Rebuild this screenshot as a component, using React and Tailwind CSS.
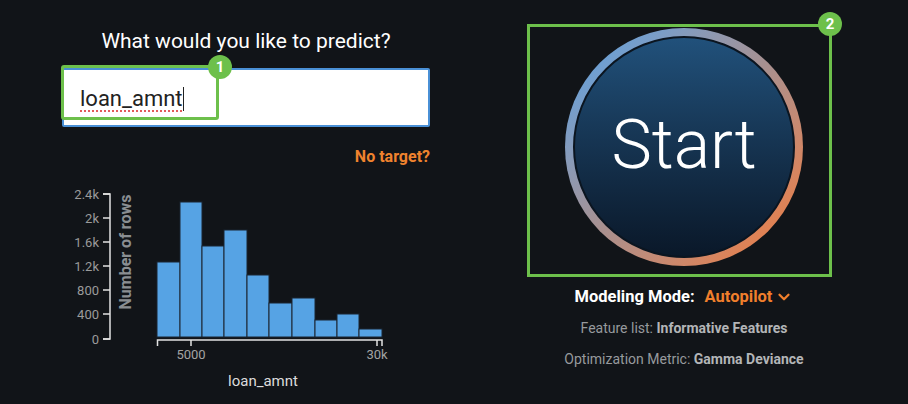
import { ChevronDown } from "lucide-react";

const bars = [
  { x: 157, h: 75 },
  { x: 180, h: 135 },
  { x: 202, h: 91 },
  { x: 224, h: 107 },
  { x: 247, h: 62 },
  { x: 269, h: 34 },
  { x: 292, h: 39 },
  { x: 315, h: 17 },
  { x: 337, h: 23 },
  { x: 359, h: 8 },
];

const yTicks = [
  { y: 195, label: "2.4k" },
  { y: 219, label: "2k" },
  { y: 243, label: "1.6k" },
  { y: 267, label: "1.2k" },
  { y: 291, label: "800" },
  { y: 315, label: "400" },
  { y: 340, label: "0" },
];

function Badge({ n, className }) {
  return (
    <span
      className={`absolute w-[24px] h-[24px] rounded-full bg-[#6dc04b] text-white text-[15px] font-bold flex items-center justify-center ${className}`}
    >
      {n}
    </span>
  );
}

function Histogram() {
  return (
    <svg width="368" height="219" viewBox="62 185 368 219" className="block">
      {/* y axis */}
      <path d="M103,195 H110 V340 H103" fill="none" stroke="#e2e2e2" strokeWidth="1.5" />
      {yTicks.map((t) => (
        <g key={t.label}>
          <line x1="103" x2="110" y1={t.y} y2={t.y} stroke="#e2e2e2" strokeWidth="1.5" />
          <text x="99" y={t.y + 4.5} textAnchor="end" fontSize="13" fill="#9b9b9b" fontFamily="Roboto, sans-serif">
            {t.label}
          </text>
        </g>
      ))}
      <text
        x="0"
        y="0"
        transform="translate(131 253) rotate(-90)"
        textAnchor="middle"
        fontSize="16"
        fontWeight="700"
        fill="#8a8e92"
        fontFamily="Roboto, sans-serif"
      >
        Number of rows
      </text>

      {/* bars */}
      {bars.map((b, i) => (
        <rect
          key={i}
          x={b.x}
          y={338 - b.h}
          width={i === 9 ? 382 - b.x : bars[i + 1].x - b.x}
          height={b.h}
          fill="#56a3e4"
          stroke="#1a2430"
          strokeWidth="1"
        />
      ))}

      {/* x axis */}
      <path d="M157.5,347 V341 H382 V347" fill="none" stroke="#e2e2e2" strokeWidth="1.5" />
      <line x1="191" x2="191" y1="341" y2="347" stroke="#e2e2e2" strokeWidth="1.5" />
      <line x1="377" x2="377" y1="341" y2="347" stroke="#e2e2e2" strokeWidth="1.5" />
      <text x="191" y="360" textAnchor="middle" fontSize="13" fill="#a3a3a3" fontFamily="Roboto, sans-serif">
        5000
      </text>
      <text x="377" y="360" textAnchor="middle" fontSize="13" fill="#a3a3a3" fontFamily="Roboto, sans-serif">
        30k
      </text>
      <text x="263" y="387" textAnchor="middle" fontSize="15" fill="#dcdcdc" fontFamily="Roboto, sans-serif">
        loan_amnt
      </text>
    </svg>
  );
}

export default function App() {
  return (
    <div className="w-[908px] h-[404px] bg-[#111418] flex overflow-hidden font-['Roboto',sans-serif]">
      {/* Target selection */}
      <div className="ml-[62px] w-[368px] flex flex-col">
        <h2 className="mt-[27px] text-center text-white text-[21px] leading-[29px] font-normal">
          What would you like to predict?
        </h2>
        <div className="relative mt-[12px] h-[59px] bg-white border-2 border-[#4a90d6] rounded-[2px] flex items-center">
          <div className="ml-[16px] mt-[2px] flex items-center text-[22px] text-[#222] leading-none">
            <span className="underline decoration-dotted decoration-[#e25b5b] decoration-2 underline-offset-[5px]">
              loan_amnt
            </span>
            <span className="w-[1px] h-[24px] bg-[#222]" />
          </div>
          <div className="absolute left-[-3px] top-[-5px] w-[158px] h-[55px] border-[3px] border-[#6dc04b] rounded-[3px]">
            <Badge n="1" className="right-[-16px] top-[-13px]" />
          </div>
        </div>
        <div className="mt-[19px] text-right text-[#f0832e] text-[16px] font-bold leading-[22px]">
          No target?
        </div>
        <div className="mt-[16px]">
          <Histogram />
        </div>
      </div>

      {/* Start panel */}
      <div className="ml-[106px] w-[296px] flex flex-col items-center">
        <div className="relative mt-[28px]">
          <div className="w-[238px] h-[238px] rounded-full bg-linear-to-br from-[#4aa3ec] via-[#a8908f] to-[#f5782a] p-[8px]">
            <div className="w-full h-full rounded-full border-2 border-[#0b1520] bg-linear-to-b from-[#21517b] to-[#0a1829] flex items-center justify-center">
              <span className="text-white text-[68px] font-light leading-none mt-[-4px]">Start</span>
            </div>
          </div>
          <div className="absolute left-[-38px] top-[-4px] w-[305px] h-[253px] border-[3px] border-[#6dc04b]">
            <Badge n="2" className="right-[-13px] top-[-15px]" />
          </div>
        </div>
        <div className="mt-[20px] flex items-center text-[16.5px] font-bold leading-[22px]">
          <span className="text-white">Modeling Mode:</span>
          <span className="ml-[10px] text-[#f07f2c]">Autopilot</span>
          <ChevronDown className="ml-[3px] text-[#f07f2c]" size={18} strokeWidth={3} />
        </div>
        <div className="mt-[10px] text-[14px] leading-[20px] text-[#979a9d]">
          Feature list: <span className="font-bold text-[#b3b5b7]">Informative Features</span>
        </div>
        <div className="mt-[11px] text-[14px] leading-[20px] text-[#979a9d]">
          Optimization Metric: <span className="font-bold text-[#b3b5b7]">Gamma Deviance</span>
        </div>
      </div>
    </div>
  );
}
